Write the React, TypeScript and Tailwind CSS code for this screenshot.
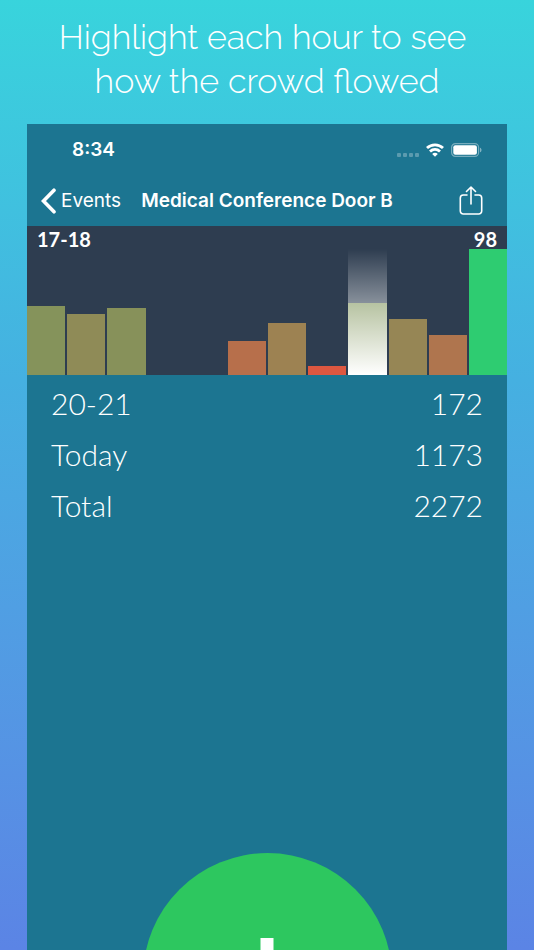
import React from "react";

type Bar = { hour: string; height: number; color: string; selected?: boolean };

const bars: Bar[] = [
  { hour: "12-13", height: 69, color: "bg-[#85935b]" },
  { hour: "13-14", height: 61, color: "bg-[#8f8b57]" },
  { hour: "14-15", height: 67, color: "bg-[#87915a]" },
  { hour: "15-16", height: 0, color: "bg-transparent" },
  { hour: "16-17", height: 0, color: "bg-transparent" },
  { hour: "17-18", height: 34, color: "bg-[#b76f4b]" },
  { hour: "18-19", height: 52, color: "bg-[#9d8252]" },
  { hour: "19-20", height: 9, color: "bg-[#dd5740]" },
  { hour: "20-21", height: 72, color: "bg-[#81965c]", selected: true },
  { hour: "21-22", height: 56, color: "bg-[#968655]" },
  { hour: "22-23", height: 40, color: "bg-[#af754e]" },
  { hour: "23-24", height: 126, color: "bg-[#2ecc71]" },
];

const totals = [
  { label: "20-21", value: "172" },
  { label: "Today", value: "1173" },
  { label: "Total", value: "2272" },
];

function StatusBar() {
  return (
    <div className="flex h-[52px] items-center justify-between pr-[25px] pl-[45px]">
      <span className="text-[19px] font-semibold">8:34</span>
      <div className="flex items-center gap-[7px]">
        <svg width="22" height="16" viewBox="0 0 22 16" fill="#fff" fillOpacity="0.28" aria-hidden="true">
          <rect x="0" y="11" width="4" height="4" rx="1" />
          <rect x="6" y="11" width="4" height="4" rx="1" />
          <rect x="12" y="11" width="4" height="4" rx="1" />
          <rect x="18" y="11" width="4" height="4" rx="1" />
        </svg>
        <svg width="18" height="14" viewBox="0 0 18 14" fill="none" stroke="#fff" strokeWidth="2.8" aria-hidden="true">
          <path d="M1 5.1C5.5 .7 12.5 .7 17 5.1" />
          <path d="M4 8.5C6.9 5.8 11.1 5.8 14 8.5" />
          <path d="M9 13.7 6.2 10.9C7.8 9.5 10.2 9.5 11.8 10.9Z" fill="#fff" stroke="none" />
        </svg>
        <svg width="31" height="14" viewBox="0 0 31 14" aria-hidden="true">
          <rect x="0.6" y="0.6" width="27" height="12.8" rx="3.8" fill="none" stroke="#fff" strokeOpacity="0.4" strokeWidth="1.2" />
          <rect x="2.3" y="2.2" width="23.6" height="9.6" rx="2" fill="#fff" />
          <path d="M29 4.7c2 .7 2 3.9 0 4.6z" fill="#fff" fillOpacity="0.45" />
        </svg>
      </div>
    </div>
  );
}

function NavBar() {
  return (
    <nav className="flex h-[50px] items-center justify-between pr-6 pl-[14px]">
      <a href="#events" className="flex items-center gap-[5px] text-[19px]">
        <svg width="15" height="26" viewBox="0 0 15 26" fill="none" stroke="#fff" strokeWidth="3.6" strokeLinecap="round" aria-hidden="true">
          <path d="M13 2.2 2.5 13 13 23.8" />
        </svg>
        Events
      </a>
      <h2 className="pr-[46px] text-[19px] font-semibold whitespace-nowrap">Medical Conference Door B</h2>
      <button type="button" aria-label="Share" className="shrink-0">
        <svg width="24" height="30" viewBox="0 0 24 30" fill="none" stroke="#fff" strokeWidth="1.6" strokeLinecap="round" strokeLinejoin="round" aria-hidden="true">
          <path d="M8 9H4.3a3 3 0 0 0-3 3V25a3 3 0 0 0 3 3H19.7a3 3 0 0 0 3-3V12a3 3 0 0 0-3-3H16" />
          <path d="M12 18V1.2M7.5 5.5 12 1 16.5 5.5" />
        </svg>
      </button>
    </nav>
  );
}

function HourChart() {
  return (
    <section aria-label="Visitors by hour" className="flex h-[149px] flex-col bg-[#2e3d50]">
      <div className="flex h-[23px] shrink-0 items-center justify-between px-[10px] pt-[2px] font-['Lato',sans-serif] text-[20px] leading-6 font-bold">
        <span>17-18</span>
        <span>98</span>
      </div>
      <div className="grid h-[126px] grid-cols-12 items-end gap-[2px]">
        {bars.map((bar) => (
          <div key={bar.hour} className="relative flex h-full items-end">
            <div className={`w-full ${bar.color}`} style={{ height: bar.height }} />
            {bar.selected && <div className="absolute inset-0 bg-linear-to-b from-white/0 to-white" />}
          </div>
        ))}
      </div>
    </section>
  );
}

export default function App() {
  return (
    <div className="flex h-screen flex-col overflow-hidden bg-linear-to-b from-[#38d4dc] via-[#45b0e1] via-40% to-[#5b84e5] font-['Inter',sans-serif] text-white">
      <h1 className="px-4 pt-[15px] pb-[21px] text-center font-['Raleway','Lato',sans-serif] text-[34px] leading-[44px] font-light">
        Highlight each hour to see&nbsp;
        <br />
        how the crowd flowed
      </h1>
      <main className="mx-[27px] flex flex-1 flex-col bg-[#1c7591]">
        <StatusBar />
        <NavBar />
        <HourChart />
        <dl className="px-6 pt-[3px] font-['Lato',sans-serif] text-[30px] leading-[51px] font-light">
          {totals.map((row) => (
            <div key={row.label} className="flex justify-between">
              <dt>{row.label}</dt>
              <dd>{row.value}</dd>
            </div>
          ))}
        </dl>
        <div className="mt-auto flex h-[97px] items-start justify-center overflow-hidden">
          <button type="button" aria-label="Add one" className="flex size-[249px] shrink-0 items-center justify-center rounded-full bg-[#2dc75f]">
            <svg width="80" height="80" viewBox="0 0 80 80" fill="#fff" aria-hidden="true">
              <path d="M33.5 0h13v33.5H80v13H46.5V80h-13V46.5H0v-13h33.5z" />
            </svg>
          </button>
        </div>
      </main>
    </div>
  );
}
